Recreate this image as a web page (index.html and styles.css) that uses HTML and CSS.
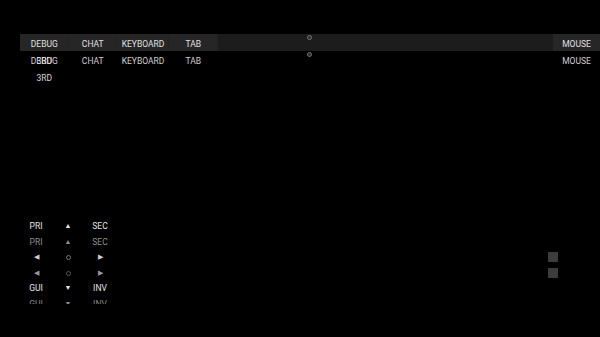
FILE: index.html
```html
<!DOCTYPE html>
<html>
<head>
<meta charset="utf-8">
<link rel="stylesheet" href="styles.css">
</head>
<body>
<div class="hud">
  <div class="top">
    <div class="row bar">
      <div class="cell">DEBUG</div>
      <div class="cell">CHAT</div>
      <div class="cell kb">KEYBOARD</div>
      <div class="cell">TAB</div>
      <div class="spacer"></div>
      <div class="cell mouse">MOUSE</div>
      <span class="ring"></span>
    </div>
    <div class="row ghost">
      <div class="cell">DEBUG</div>
      <div class="cell">CHAT</div>
      <div class="cell kb">KEYBOARD</div>
      <div class="cell">TAB</div>
      <div class="spacer"></div>
      <div class="cell mouse">MOUSE</div>
      <span class="ring"></span>
      <span class="third">3RD</span>
    </div>
    <div class="row plain">
      <div class="cell third2">3RD</div>
    </div>
  </div>

  <div class="bottom">
    <div class="pad">
      <div class="grid">
        <span class="r1">PRI</span><span class="r1 tri">▲</span><span class="r1">SEC</span>
        <span class="r2">PRI</span><span class="r2 tri">▲</span><span class="r2">SEC</span>
        <span class="r3 tri">◀</span><span class="r3 dot"><i></i></span><span class="r3 tri">▶</span>
        <span class="r4 tri">◀</span><span class="r4 dot"><i></i></span><span class="r4 tri">▶</span>
        <span class="r5">GUI</span><span class="r5 tri">▼</span><span class="r5">INV</span>
        <span class="r6">GUI</span><span class="r6 tri">▼</span><span class="r6">INV</span>
      </div>
    </div>
    <div class="squares">
      <div class="sq"></div>
      <div class="sq"></div>
    </div>
  </div>
</div>
</body>
</html>
```

FILE: styles.css
```css
html, body {
  margin: 0;
  padding: 0;
  background: #000;
}
body {
  width: 600px;
  height: 337px;
  overflow: hidden;
  font-family: Roboto, "Liberation Sans", sans-serif;
  font-size: 8.5px;
  color: #e0e0e0;
}
.hud {
  display: flex;
  flex-direction: column;
  height: 337px;
}
.top {
  margin-top: 34px;
  margin-left: 20px;
}
.row {
  position: relative;
  display: flex;
  height: 17px;
  line-height: 21px;
}
.bar {
  background: #1c1c1c;
}
.bar .cell {
  background: #262626;
  box-shadow: inset -1px 0 0 #222;
}
.bar .spacer {
  background: #1c1c1c;
}
.cell {
  width: 48.5px;
  text-align: center;
  white-space: nowrap;
}
.cell.kb {
  width: 52px;
}
.spacer {
  flex: 1;
}
.cell.mouse {
  width: 47px;
  box-shadow: none;
}
.ghost {
  color: #cfcfcf;
}
.ring {
  position: absolute;
  left: 286.5px;
  top: 1px;
  width: 3px;
  height: 3px;
  border: 1px solid #777;
  border-radius: 50%;
  background: #2a2a2a;
}
.third {
  position: absolute;
  left: 0;
  width: 48.5px;
  top: 0;
  text-align: center;
  color: #e0e0e0;
}
.third2 {
  color: #d8d8d8;
}
.bottom {
  margin-top: auto;
  margin-bottom: 33px;
  display: flex;
  justify-content: space-between;
  align-items: flex-start;
}
.pad {
  margin-left: 20px;
  height: 85px;
  overflow: hidden;
}
.grid {
  display: grid;
  grid-template-columns: 32px 32px 32px;
  grid-auto-rows: 15.6px;
  align-items: center;
  justify-items: center;
}
.grid span {
  line-height: 15.6px;
}
.tri {
  font-size: 7px;
}
.dot {
  display: flex;
  align-items: center;
  justify-content: center;
  height: 15.6px;
}
.dot i {
  display: block;
  width: 3px;
  height: 3px;
  border: 1px solid currentColor;
  border-radius: 50%;
}
.r1 { color: #e6e6e6; }
.r2 { color: #8e8e8e; }
.r3 { color: #d0d0d0; }
.r3.dot { color: #777; }
.r4 { color: #999; }
.r4.dot { color: #555; }
.r5 { color: #e6e6e6; }
.r6 { color: #888; }
.squares {
  margin-top: 33px;
  margin-right: 42px;
  display: flex;
  flex-direction: column;
  gap: 6px;
}
.sq {
  width: 10px;
  height: 10px;
  background: #3c3c3c;
}
```
